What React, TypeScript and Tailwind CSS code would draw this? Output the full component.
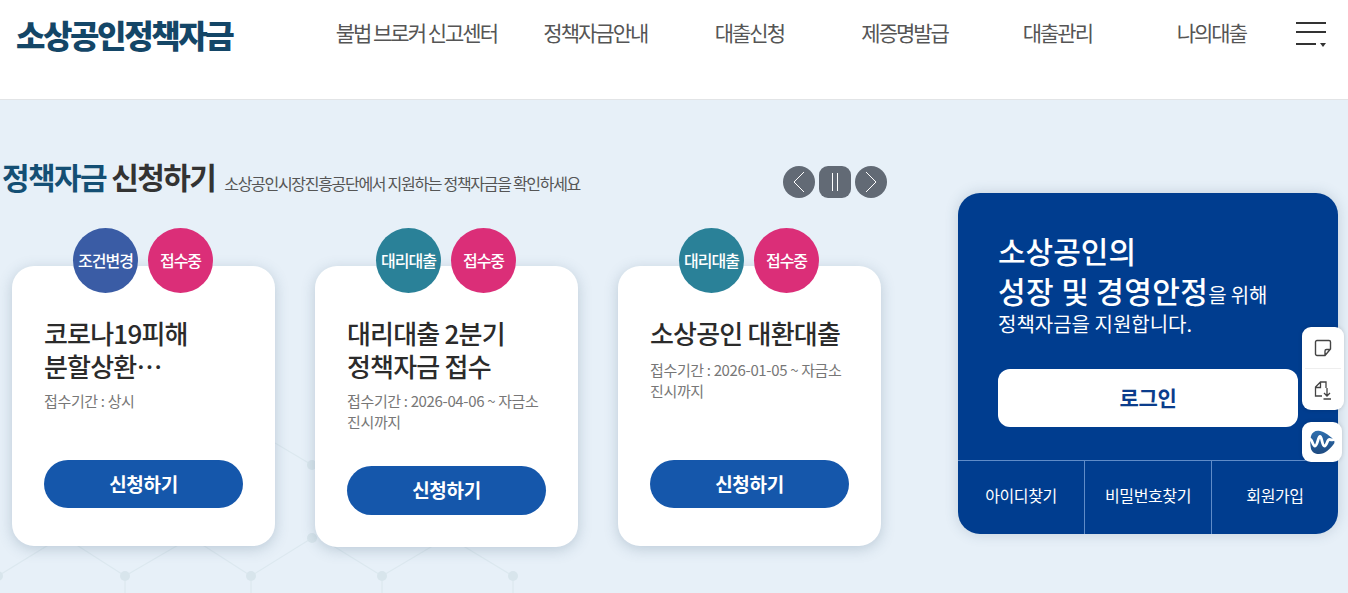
const font = "font-['Noto_Sans_CJK_KR','Noto_Sans',sans-serif]";

const navItems = [
    { label: "불법 브로커 신고센터", cls: "w-[162px]" },
    { label: "정책자금안내", cls: "ml-[46px] w-[104px]" },
    { label: "대출신청", cls: "ml-[67px] w-[70px]" },
    { label: "제증명발급", cls: "ml-[77px] w-[86px]" },
    { label: "대출관리", cls: "ml-[75px] w-[70px]" },
    { label: "나의대출", cls: "ml-[84px] w-[70px]" },
];

const cards = [
    {
        badge: "조건변경",
        badgeColor: "bg-[#3a5ca5]",
        title: "코로나19피해\n분할상환…",
        period: "접수기간 : 상시",
        periodGap: "mt-[8px]",
        body: "h-[192px] mb-[38px]",
        button: "h-12",
    },
    {
        badge: "대리대출",
        badgeColor: "bg-[#2a8198]",
        title: "대리대출 2분기\n정책자금 접수",
        period: "접수기간 : 2026-04-06 ~ 자금소\n진시까지",
        periodGap: "mt-[8px]",
        body: "h-[199px] mb-[32px]",
        button: "h-[49px]",
    },
    {
        badge: "대리대출",
        badgeColor: "bg-[#2a8198]",
        title: "소상공인 대환대출",
        period: "접수기간 : 2026-01-05 ~ 자금소\n진시까지",
        periodGap: "mt-[10px]",
        body: "h-[192px] mb-[38px]",
        button: "h-12",
    },
];

function HexBackground() {
    const nodes = [
        [-2, 576], [125, 576], [251, 576], [382, 576], [513, 576], [312, 538], [312, 465],
    ];
    return (
        <svg className="absolute left-0 top-[400px]" width="700" height="193" viewBox="0 400 700 193" fill="none">
            <path
                d="M-2 576 L50 544 M125 576 L75 544 M125 576 L180 544 M251 576 L195 540 M251 576 L312 538 M382 576 L330 544 M382 576 L436 544 M513 576 L460 544 M125 576 V593 M251 576 V593 M382 576 V593 M513 576 V593 M275 443 L312 465"
                stroke="#dce8ef"
                strokeWidth="1.2"
            />
            {nodes.map(([cx, cy], i) => (
                <circle key={i} cx={cx} cy={cy} r="5" fill="#d8e5ec" />
            ))}
        </svg>
    );
}

function PolicyCard({ card }: { card: (typeof cards)[number] }) {
    return (
        <div className="w-[263px]">
            <div className="relative z-10 ml-[61px] flex gap-[10px]">
                <span className={`flex size-[65px] items-center justify-center rounded-full pb-[2px] text-[16px] font-medium tracking-[-1px] text-white ${card.badgeColor}`}>
                    {card.badge}
                </span>
                <span className="flex size-[65px] items-center justify-center rounded-full bg-[#db2e78] pb-[2px] text-[16px] font-medium tracking-[-1px] text-white">
                    접수중
                </span>
            </div>
            <div className="-mt-[27px] flow-root rounded-[22px] bg-white px-8 pt-[50px] shadow-[0_3px_14px_rgba(60,90,120,0.25)]">
                <div className={`flex flex-col ${card.body}`}>
                    <h3 className="whitespace-pre-line text-[26px] font-medium leading-[33px] tracking-[-0.8px] text-[#2b2b2b]">
                        {card.title}
                    </h3>
                    <p className={`whitespace-pre-line text-[15px] leading-[21px] tracking-[-0.35px] text-[#777] ${card.periodGap}`}>
                        {card.period}
                    </p>
                    <button className={`mt-auto w-full rounded-full bg-[#1557ab] text-[19px] font-bold tracking-[-0.3px] text-white ${card.button}`}>
                        신청하기
                    </button>
                </div>
            </div>
        </div>
    );
}

function SliderControls() {
    return (
        <div className="flex gap-[4px]">
            <button className="flex size-8 items-center justify-center rounded-full bg-[#626a75]">
                <svg width="14" height="22" viewBox="0 0 14 22" fill="none" stroke="#fff" strokeWidth="1">
                    <path d="M12 1 2 11l10 10" />
                </svg>
            </button>
            <button className="flex size-8 items-center justify-center rounded-[9px] bg-[#626a75]">
                <svg width="10" height="18" viewBox="0 0 10 18" fill="none" stroke="#fff" strokeWidth="1">
                    <path d="M2.5 0v18M7.5 0v18" />
                </svg>
            </button>
            <button className="flex size-8 items-center justify-center rounded-full bg-[#626a75]">
                <svg width="14" height="22" viewBox="0 0 14 22" fill="none" stroke="#fff" strokeWidth="1">
                    <path d="m2 1 10 10L2 21" />
                </svg>
            </button>
        </div>
    );
}

function FloatingTools() {
    return (
        <div className="absolute left-[1302px] top-[327px] z-20 w-[42px]">
            <div className="rounded-[9px] bg-white shadow-[0_0_4px_rgba(0,0,0,0.15)]">
                <div className="flex h-[41px] items-center justify-center">
                    <svg width="18" height="18" viewBox="0 0 18 18" fill="none" stroke="#444" strokeWidth="1.4">
                        <path d="M11 16.5H3A1.5 1.5 0 0 1 1.5 15V3A1.5 1.5 0 0 1 3 1.5h12A1.5 1.5 0 0 1 16.5 3v7L11 16.5Zm0 0V12a1.5 1.5 0 0 1 1.5-1.5h4" />
                    </svg>
                </div>
                <div className="mx-[3px] border-t border-[#eeeeee]" />
                <div className="flex h-[41px] items-center justify-center">
                    <svg width="18" height="20" viewBox="0 0 18 20" fill="none" stroke="#444" strokeWidth="1.3">
                        <path d="M8 16H1.5V7L6.5 2H12v6M1.5 7.5h5V2M13 8v8m-3-3 3 3 3-3M9.5 19H17" />
                    </svg>
                </div>
            </div>
            <div className="mt-[12px] flex h-10 w-10 items-center justify-center rounded-[9px] bg-white shadow-[0_0_4px_rgba(0,0,0,0.15)]">
                <svg width="26" height="25" viewBox="0 0 26 25" fill="none">
                    <defs>
                        <linearGradient id="waveLogo" x1="0" y1="0" x2="0" y2="1">
                            <stop offset="0" stopColor="#2f6fae" />
                            <stop offset="1" stopColor="#1e4a80" />
                        </linearGradient>
                    </defs>
                    <path d="M2 6C3 2 7 0 11 1c5 1 10 5 13 8 2 2 2 4 0 6-3 4-8 9-14 9-4 0-7-2-8-5C1 14 1 10 2 6Z" fill="url(#waveLogo)" />
                    <path d="M0.5 9c3 0 3 7 5.500 7S9 6.500 11 6.500s2 9.500 4.500 9.500 2.500-6.500 5-6.500 2.500 1 5 0" stroke="#fff" strokeWidth="2.8" />
                </svg>
            </div>
        </div>
    );
}

export default function App() {
    return (
        <div className={`relative h-[593px] w-[1348px] overflow-hidden bg-[#e7f0f8] ${font}`}>
            <header className="flex h-[100px] items-start border-b border-[#e2e4e6] bg-white">
                <h1 className="ml-4 mt-[12px] text-[32px] font-black leading-[44px] tracking-[-2.4px] text-[#144667]">
                    소상공인정책자금
                </h1>
                <nav className="ml-[103px] mt-[18px] flex text-[21px] font-normal leading-7 tracking-[-2px] text-[#555]">
                    {navItems.map((item) => (
                        <a key={item.label} className={`whitespace-nowrap text-center ${item.cls}`}>
                            {item.label}
                        </a>
                    ))}
                </nav>
                <div className="ml-[50px] mt-[22px] w-[30px]">
                    <div className="h-[2px] bg-[#333]" />
                    <div className="mt-[7px] h-[2px] bg-[#333]" />
                    <div className="mt-[7px] flex items-center justify-between">
                        <div className="h-[2px] w-5 bg-[#333]" />
                        <div className="mt-[3px] size-0 border-x-[3px] border-t-[4px] border-x-transparent border-t-[#333]" />
                    </div>
                </div>
            </header>

            <HexBackground />
            <FloatingTools />

            <main className="relative flex">
                <section className="w-[958px]">
                    <div className="ml-[2px] mt-[60px] flex h-[44px] items-center">
                        <h2 className="-mt-[12px] whitespace-nowrap text-[30px] font-bold tracking-[-1.6px] text-[#333]">
                            <span className="text-[#144f74]">정책자금</span> 신청하기
                        </h2>
                        <p className="ml-[9px] mt-[1px] whitespace-nowrap text-[16px] tracking-[-1.3px] text-[#555]">
                            소상공인시장진흥공단에서 지원하는 정책자금을 확인하세요
                        </p>
                        <div className="ml-[203px]">
                            <SliderControls />
                        </div>
                    </div>
                    <div className="ml-3 mt-[24px] flex items-start gap-10">
                        {cards.map((card, i) => (
                            <PolicyCard key={i} card={card} />
                        ))}
                    </div>
                </section>

                <aside className="mt-[93px] h-[341px] w-[380px] rounded-[22px] bg-[#003d8f] text-white shadow-[0_0_14px_rgba(50,80,110,0.2)]">
                    <div className="h-[268px] border-b border-[#5f8cc8] px-10 pt-[37px]">
                        <p className="text-[30px] font-medium leading-[40px]">소상공인의</p>
                        <p className="mt-[2px] text-[30px] font-medium leading-[36px] tracking-[0.4px]">
                            성장 및 경영안정<span className="text-[20px] font-normal leading-none tracking-[-0.2px]">을 위해</span>
                        </p>
                        <p className="mt-[2px] text-[20px] leading-[28px]">정책자금을 지원합니다.</p>
                        <button className="mt-[31px] h-[58px] w-[300px] rounded-[12px] bg-white text-[21px] font-bold tracking-[-0.3px] text-[#0b3d8c]">
                            로그인
                        </button>
                    </div>
                    <div className="flex h-[73px] text-[16px] tracking-[-0.4px]">
                        <a className="flex w-[127px] items-center justify-center border-r border-[#5f8cc8] pb-[6px]">아이디찾기</a>
                        <a className="flex w-[127px] items-center justify-center border-r border-[#5f8cc8] pb-[6px]">비밀번호찾기</a>
                        <a className="flex flex-1 items-center justify-center pb-[6px]">회원가입</a>
                    </div>
                </aside>
            </main>
        </div>
    );
}
